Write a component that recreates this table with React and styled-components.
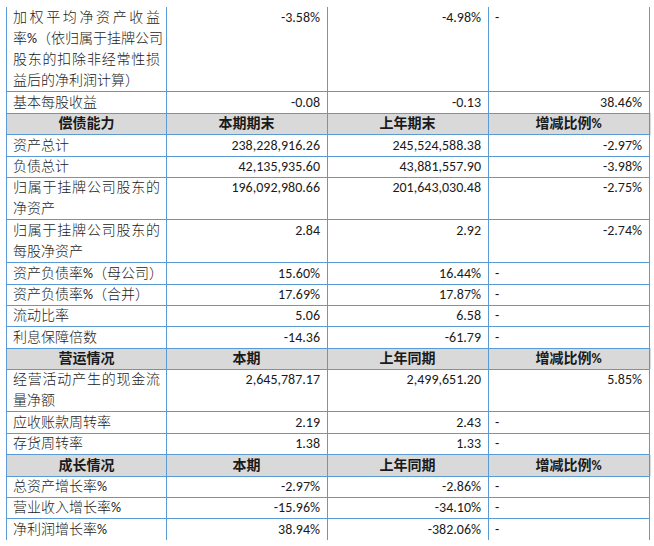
import React from 'react';
import styled, { createGlobalStyle } from 'styled-components';

const UNIT = 21.333;

const GlobalStyle = createGlobalStyle`
  html, body {
    margin: 0;
    padding: 0;
    background: #ffffff;
  }
`;

const Page = styled.div`
  padding: 6.67px 0 0 6px;
`;

const Table = styled.div`
  width: 644px;
  border-left: 1px solid #5b9bd5;
  font-family: Carlito, Calibri, 'Noto Sans CJK SC', sans-serif;
  font-size: 14px;
  color: #1a1a1a;
`;

const Row = styled.div`
  display: grid;
  grid-template-columns: 160px 161px 161px 161px;
  height: ${(p) => p.$lines * UNIT}px;
  background: ${(p) => (p.$header ? '#d9d9d9' : 'transparent')};
`;

const Cell = styled.div`
  box-sizing: border-box;
  border-right: 1px solid #5b9bd5;
  border-bottom: 1px solid #5b9bd5;
  padding: 0 ${(p) => (p.$first ? 6 : 7)}px 0 6px;
  line-height: 21px;
  text-align: ${(p) => p.$align || 'right'};
  white-space: nowrap;
  font-weight: ${(p) => (p.$header ? 700 : 300)};
`;

const Line = styled.span`
  display: block;
  text-align: ${(p) => (p.$justify ? 'justify' : 'left')};
  text-align-last: ${(p) => (p.$justify ? 'justify' : 'left')};
`;

const headers = [
  { header: true, cols: ['偿债能力', '本期期末', '上年期末', '增减比例%'] },
  { header: true, cols: ['营运情况', '本期', '上年同期', '增减比例%'] },
  { header: true, cols: ['成长情况', '本期', '上年同期', '增减比例%'] },
];

const rows = [
  {
    label: ['加权平均净资产收益', '率%（依归属于挂牌公司', '股东的扣除非经常性损', '益后的净利润计算）'],
    cols: ['-3.58%', '-4.98%', '-'],
  },
  { label: ['基本每股收益'], cols: ['-0.08', '-0.13', '38.46%'] },
  headers[0],
  { label: ['资产总计'], cols: ['238,228,916.26', '245,524,588.38', '-2.97%'] },
  { label: ['负债总计'], cols: ['42,135,935.60', '43,881,557.90', '-3.98%'] },
  { label: ['归属于挂牌公司股东的', '净资产'], cols: ['196,092,980.66', '201,643,030.48', '-2.75%'] },
  { label: ['归属于挂牌公司股东的', '每股净资产'], cols: ['2.84', '2.92', '-2.74%'] },
  { label: ['资产负债率%（母公司）'], cols: ['15.60%', '16.44%', '-'] },
  { label: ['资产负债率%（合并）'], cols: ['17.69%', '17.87%', '-'] },
  { label: ['流动比率'], cols: ['5.06', '6.58', '-'] },
  { label: ['利息保障倍数'], cols: ['-14.36', '-61.79', '-'] },
  headers[1],
  { label: ['经营活动产生的现金流', '量净额'], cols: ['2,645,787.17', '2,499,651.20', '5.85%'] },
  { label: ['应收账款周转率'], cols: ['2.19', '2.43', '-'] },
  { label: ['存货周转率'], cols: ['1.38', '1.33', '-'] },
  headers[2],
  { label: ['总资产增长率%'], cols: ['-2.97%', '-2.86%', '-'] },
  { label: ['营业收入增长率%'], cols: ['-15.96%', '-34.10%', '-'] },
  { label: ['净利润增长率%'], cols: ['38.94%', '-382.06%', '-'] },
];

const DataRow = ({ row }) => {
  if (row.header) {
    return (
      <Row $lines={1} $header>
        {row.cols.map((c, i) => (
          <Cell key={i} $header $align="center" $first={i === 0}>
            {c}
          </Cell>
        ))}
      </Row>
    );
  }
  const n = row.label.length;
  return (
    <Row $lines={n}>
      <Cell $align="left" $first>
        {row.label.map((l, i) => (
          <Line key={i} $justify={i < n - 1}>
            {l}
          </Line>
        ))}
      </Cell>
      {row.cols.map((c, i) => (
        <Cell key={i} $align={c === '-' ? 'left' : 'right'}>
          {c}
        </Cell>
      ))}
    </Row>
  );
};

const App = () => (
  <Page>
    <GlobalStyle />
    <Table>
      {rows.map((row, i) => (
        <DataRow key={i} row={row} />
      ))}
    </Table>
  </Page>
);

export default App;
